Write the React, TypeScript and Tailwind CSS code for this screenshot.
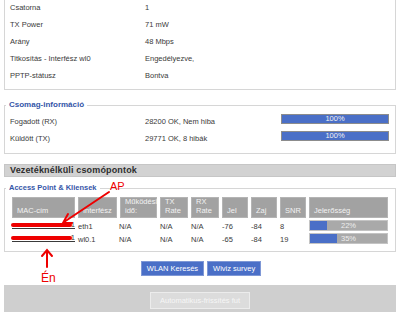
import React from "react";

const statusRows = [
  ["Csatorna", "1"],
  ["TX Power", "71 mW"],
  ["Arány", "48 Mbps"],
  ["Titkosítás - Interfész wl0", "Engedélyezve,"],
  ["PPTP-státusz", "Bontva"],
];

const packetRows = [
  ["Fogadott (RX)", "28200 OK, Nem hiba"],
  ["Küldött (TX)", "29771 OK, 8 hibák"],
];

const heads = [
  ["MAC-cím"],
  ["Interfész"],
  ["Működési", "idő:"],
  ["TX", "Rate"],
  ["RX", "Rate"],
  ["Jel"],
  ["Zaj"],
  ["SNR"],
  ["Jelerősség"],
];

const clients = [
  { iface: "eth1", jel: "-76", zaj: "-84", snr: "8", pct: 22 },
  { iface: "wl0.1", jel: "-65", zaj: "-84", snr: "19", pct: 35 },
];

const Bar = ({ pct }: { pct: number }) => (
  <div className="relative h-[11px] w-full border border-[#c4c4c4] bg-[#a9a9a9]">
    <div className="h-full bg-[#4a6fc7]" style={{ width: `${pct}%` }} />
    <span className="absolute inset-0 text-center leading-[9px] text-[#eeeeee]">{pct}%</span>
  </div>
);

export default function App() {
  return (
    <div
      className="relative h-[312px] w-[400px] overflow-hidden bg-white text-[7.5px] text-[#3a3a3a]"
      style={{ fontFamily: '"Liberation Sans", Arial, sans-serif' }}
    >
      {/* wireless status */}
      <div className="ml-[4px] h-[91px] w-[392px] border-x border-b border-[#d6d6d6] pl-[5px]">
        <div className="-mt-[1px]">
          {statusRows.map(([k, v]) => (
            <div key={k} className="flex h-[17px] items-center">
              <span className="w-[135px]">{k}</span>
              <span>{v}</span>
            </div>
          ))}
        </div>
      </div>

      {/* packet info */}
      <fieldset className="ml-[4px] mt-[9px] w-[392px] border border-[#d6d6d6] pl-[5px] pr-[6px] pb-[6px]">
        <legend className="-ml-[4px] px-[3px] text-[8px] font-bold leading-[12px] text-[#3456a8]">
          Csomag-információ
        </legend>
        <div className="pt-[2px]">
          {packetRows.map(([k, v]) => (
            <div key={k} className="flex h-[17px] items-start">
              <span className="w-[135px] leading-[17px]">{k}</span>
              <span className="w-[136px] leading-[17px]">{v}</span>
              <div className="mt-[1px] h-[10px] w-[108px] border border-[#8c8c8c] bg-[#4a6fc7] text-center leading-[8px] text-[#f2f2f2]">
                100%
              </div>
            </div>
          ))}
        </div>
      </fieldset>

      {/* section header */}
      <div className="ml-[4px] mt-[10px] h-[13px] w-[392px] border border-[#c6c6c6] bg-[#d2d2d2] pl-[5px] text-[9px] font-bold leading-[11px] tracking-[0.15px] text-[#2e2e2e]">
        Vezetéknélküli csomópontok
      </div>

      {/* clients */}
      <fieldset className="ml-[4px] mt-[5px] w-[392px] border border-[#d6d6d6] pl-[7px] pb-[5px]">
        <legend className="-ml-[6px] px-[3px] text-[7.5px] font-bold leading-[12px] text-[#3456a8]">
          Access Point &amp; Kliensek
        </legend>
        <div className="mt-[3px] grid grid-cols-[63px_39px_37px_28px_28px_26px_26px_26px_79px] grid-rows-[23px_13px_13px] gap-x-[3px]">
          {heads.map((h, i) => (
            <div
              key={i}
              className="flex h-[21px] flex-col justify-end border border-[#b4b4b4] bg-[#a2a2a2] pb-[2px] pl-[4px] leading-[9px] text-[#f2f2f2]"
            >
              {h.map((l) => (
                <span key={l}>{l}</span>
              ))}
            </div>
          ))}
          {clients.map((c) => (
            <React.Fragment key={c.iface}>
              <div className="relative h-[13px]">
                <div className="flex h-[9px] justify-end border-b border-[#3a3a3a] leading-[9px]">1</div>
                <div className="absolute left-[-1px] top-[3px] h-[4px] w-[61px] rounded-full bg-[#ee0000]" />
              </div>
              <div className="leading-[13px]">{c.iface}</div>
              <div className="-ml-[1px] leading-[13px]">N/A</div>
              <div className="leading-[13px]">N/A</div>
              <div className="leading-[13px]">N/A</div>
              <div className="leading-[13px]">{c.jel}</div>
              <div className="leading-[13px]">{c.zaj}</div>
              <div className="leading-[13px]">{c.snr}</div>
              <div>
                <Bar pct={c.pct} />
              </div>
            </React.Fragment>
          ))}
        </div>
      </fieldset>

      {/* buttons */}
      <div className="mt-[9px] flex justify-center gap-[3px] pl-[2px]">
        <button className="h-[15px] border border-[#7f98d6] bg-[#4a6fc7] px-[5px] text-[7.5px] leading-[13px] text-white">
          WLAN Keresés
        </button>
        <button className="h-[15px] border border-[#7f98d6] bg-[#4a6fc7] px-[5px] text-[7.5px] leading-[13px] text-white">
          Wiviz survey
        </button>
      </div>

      {/* bottom bar */}
      <div className="ml-[4px] mt-[9px] flex h-[27px] w-[392px] justify-center bg-[#cfcfcf] pt-[7px]">
        <button className="h-[17px] w-[100px] border border-[#ececec] bg-[#dcdcdc] text-[7.5px] text-[#f6f6f6]">
          Automatikus-frissítés fut
        </button>
      </div>

      {/* annotations */}
      <svg className="pointer-events-none absolute left-0 top-0" width="400" height="312">
        <g stroke="#ee0000" strokeWidth="2" fill="none" strokeLinecap="round">
          <line x1="109" y1="192" x2="64" y2="222" />
          <polyline points="68,214 63,223 72,223" />
          <line x1="47" y1="251" x2="47" y2="267" />
          <polyline points="42,256 47,250 52,256" />
        </g>
      </svg>
      <span className="absolute left-[110px] top-[180px] text-[11px] leading-[13px] text-[#ee0000]">AP</span>
      <span className="absolute left-[41px] top-[271px] text-[12px] font-medium leading-[14px] text-[#ee0000]">Én</span>
    </div>
  );
}
